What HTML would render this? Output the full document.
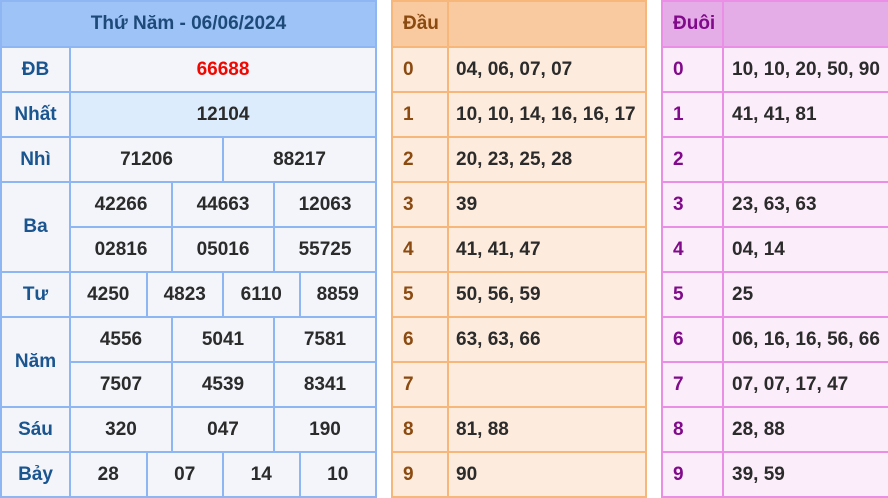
<!DOCTYPE html>
<html><head><meta charset="utf-8"><style>
*{margin:0;padding:0;box-sizing:border-box}
body{width:888px;height:497px;background:#fff;overflow:hidden;position:relative;font-family:"Liberation Sans",Arial,sans-serif;font-weight:bold;font-size:19px;color:#2b2b2b}
table{position:absolute;top:0;border-collapse:collapse;table-layout:fixed}
td{height:45px;text-align:center;vertical-align:middle;padding:0}
#L{left:0;width:377px;height:496px;border:2px solid #7aaaf0}
#L td{border:2px solid #8db6f2;background:#f3f5fa}
#L td.lb{color:#1a5590}
#L .hd td{background:#9ec3f7;color:#1d4a78;height:46px}
#L .n1 td{background:#ddecfd}
.red{color:#f00800}
#M{left:391px;width:256px;height:496px;border:2px solid #f4ad6a}
#M td{border:2px solid #f7b77a;background:#fdebdd;text-align:left;padding-left:7px}
#M td.lb,#R td.lb{padding-left:10px}
#M .hd td{background:#f9caa0;color:#5b2a0c;height:46px}
#M td.lb{color:#8b4a10}
#R{left:661px;width:240px;height:496px;border:2px solid #e57fe0}
#R td{border:2px solid #ea8ee6;background:#fcedfa;text-align:left;padding-left:8px}
#R .hd td{background:#e5ade8;color:#5b2a0c;height:46px}
#R td.lb{color:#800a8a}
</style></head><body>
<table id="L">
<colgroup><col style="width:69px"><col><col><col><col><col><col><col><col><col><col><col><col></colgroup>
<tr class="hd"><td colspan="13">Thứ Năm - 06/06/2024</td></tr>
<tr><td class="lb">ĐB</td><td colspan="12" class="red">66688</td></tr>
<tr class="n1"><td class="lb" style="background:#f3f5fa">Nhất</td><td colspan="12">12104</td></tr>
<tr><td class="lb">Nhì</td><td colspan="6">71206</td><td colspan="6">88217</td></tr>
<tr><td class="lb" rowspan="2">Ba</td><td colspan="4">42266</td><td colspan="4">44663</td><td colspan="4">12063</td></tr>
<tr><td colspan="4">02816</td><td colspan="4">05016</td><td colspan="4">55725</td></tr>
<tr><td class="lb">Tư</td><td colspan="3">4250</td><td colspan="3">4823</td><td colspan="3">6110</td><td colspan="3">8859</td></tr>
<tr><td class="lb" rowspan="2">Năm</td><td colspan="4">4556</td><td colspan="4">5041</td><td colspan="4">7581</td></tr>
<tr><td colspan="4">7507</td><td colspan="4">4539</td><td colspan="4">8341</td></tr>
<tr><td class="lb">Sáu</td><td colspan="4">320</td><td colspan="4">047</td><td colspan="4">190</td></tr>
<tr><td class="lb">Bảy</td><td colspan="3">28</td><td colspan="3">07</td><td colspan="3">14</td><td colspan="3">10</td></tr>
</table>
<table id="M">
<colgroup><col style="width:56px"><col></colgroup>
<tr class="hd"><td class="lb">Đầu</td><td></td></tr>
<tr><td class="lb">0</td><td>04, 06, 07, 07</td></tr>
<tr><td class="lb">1</td><td>10, 10, 14, 16, 16, 17</td></tr>
<tr><td class="lb">2</td><td>20, 23, 25, 28</td></tr>
<tr><td class="lb">3</td><td>39</td></tr>
<tr><td class="lb">4</td><td>41, 41, 47</td></tr>
<tr><td class="lb">5</td><td>50, 56, 59</td></tr>
<tr><td class="lb">6</td><td>63, 63, 66</td></tr>
<tr><td class="lb">7</td><td></td></tr>
<tr><td class="lb">8</td><td>81, 88</td></tr>
<tr><td class="lb">9</td><td>90</td></tr>
</table>
<table id="R">
<colgroup><col style="width:61px"><col></colgroup>
<tr class="hd"><td class="lb">Đuôi</td><td></td></tr>
<tr><td class="lb">0</td><td>10, 10, 20, 50, 90</td></tr>
<tr><td class="lb">1</td><td>41, 41, 81</td></tr>
<tr><td class="lb">2</td><td></td></tr>
<tr><td class="lb">3</td><td>23, 63, 63</td></tr>
<tr><td class="lb">4</td><td>04, 14</td></tr>
<tr><td class="lb">5</td><td>25</td></tr>
<tr><td class="lb">6</td><td>06, 16, 16, 56, 66</td></tr>
<tr><td class="lb">7</td><td>07, 07, 17, 47</td></tr>
<tr><td class="lb">8</td><td>28, 88</td></tr>
<tr><td class="lb">9</td><td>39, 59</td></tr>
</table>
</body></html>
